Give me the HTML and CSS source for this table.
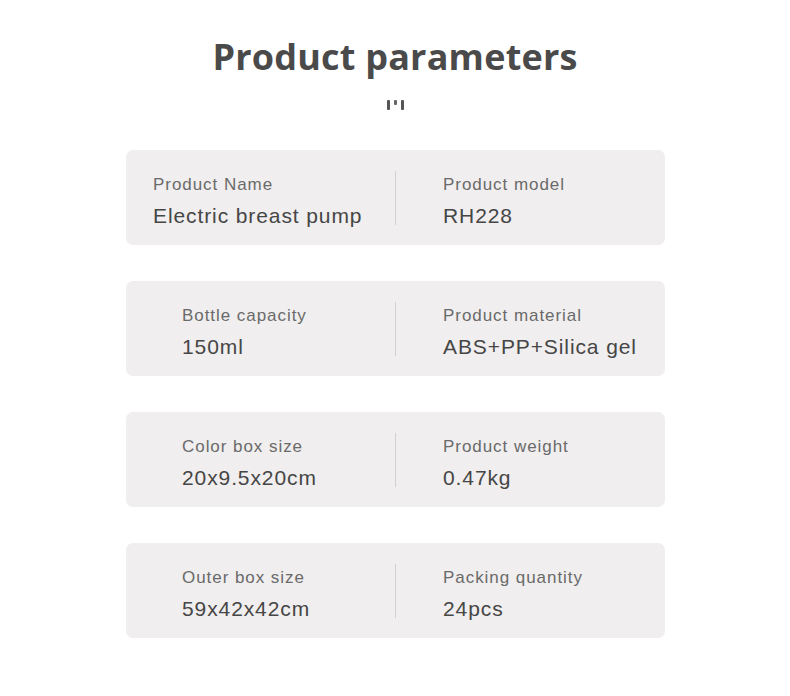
FILE: index.html
```html
<!DOCTYPE html>
<html lang="en">
<head>
<meta charset="utf-8">
<title>Product parameters</title>
<link rel="stylesheet" href="styles.css">
</head>
<body>
<main class="page">
  <h1 class="title">Product parameters</h1>
  <div class="deco" aria-hidden="true">
    <span class="bar"></span><span class="dot"></span><span class="bar"></span>
  </div>
  <section class="cards">
    <div class="card">
      <div class="cell cell-left cell-wide">
        <div class="label">Product Name</div>
        <div class="value">Electric breast pump</div>
      </div>
      <div class="divider"></div>
      <div class="cell cell-right">
        <div class="label">Product model</div>
        <div class="value">RH228</div>
      </div>
    </div>
    <div class="card">
      <div class="cell cell-left">
        <div class="label">Bottle capacity</div>
        <div class="value">150ml</div>
      </div>
      <div class="divider"></div>
      <div class="cell cell-right">
        <div class="label">Product material</div>
        <div class="value">ABS+PP+Silica gel</div>
      </div>
    </div>
    <div class="card">
      <div class="cell cell-left">
        <div class="label">Color box size</div>
        <div class="value">20x9.5x20cm</div>
      </div>
      <div class="divider"></div>
      <div class="cell cell-right">
        <div class="label">Product weight</div>
        <div class="value">0.47kg</div>
      </div>
    </div>
    <div class="card">
      <div class="cell cell-left">
        <div class="label">Outer box size</div>
        <div class="value">59x42x42cm</div>
      </div>
      <div class="divider"></div>
      <div class="cell cell-right">
        <div class="label">Packing quantity</div>
        <div class="value">24pcs</div>
      </div>
    </div>
  </section>
</main>
</body>
</html>
```
FILE: styles.css
```css
* { box-sizing: border-box; }
html, body { margin: 0; padding: 0; background: #ffffff; }
body { font-family: "Liberation Sans", Arial, sans-serif; }

.page {
  width: 790px;
  padding-top: 35px;
  display: flex;
  flex-direction: column;
  align-items: center;
}

.title {
  margin: 0;
  font-family: "Open Sans", sans-serif;
  font-weight: 700;
  font-size: 36px;
  line-height: 44px;
  color: #4a4a4a;
  letter-spacing: 0.2px;
}

.deco {
  margin-top: 21px;
  height: 10px;
  display: flex;
  align-items: flex-start;
  gap: 4px;
}
.deco .bar {
  width: 3px;
  height: 10px;
  background: #555;
  border-radius: 1px;
}
.deco .dot {
  width: 3px;
  height: 5px;
  background: #666;
  border-radius: 1px;
}

.cards {
  margin-top: 40px;
  display: flex;
  flex-direction: column;
  gap: 36px;
  width: 539px;
  margin-left: 1px;
}

.card {
  height: 95px;
  background: #f0eeee;
  border-radius: 7px;
  display: grid;
  grid-template-columns: 269px 1px 1fr;
  align-items: start;
}

.cell { padding-top: 25px; }
.cell-left { padding-left: 56px; }
.cell-left.cell-wide { padding-left: 27px; }
.cell-right { padding-left: 47px; }

.divider {
  margin-top: 21px;
  height: 54px;
  background: #d2d0d0;
}

.label {
  font-size: 17px;
  line-height: 20px;
  color: #6a6a6a;
  letter-spacing: 0.95px;
}

.value {
  margin-top: 8px;
  font-size: 21px;
  line-height: 26px;
  color: #464646;
  letter-spacing: 0.9px;
}
```
